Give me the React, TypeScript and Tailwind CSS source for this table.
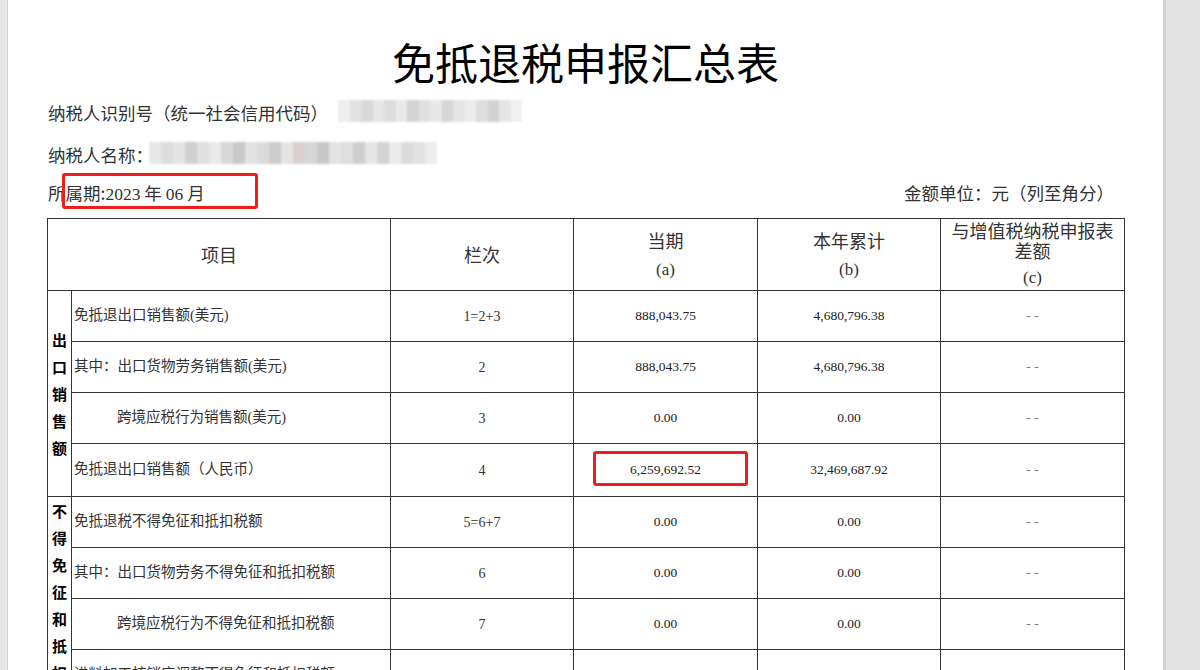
const rows = [
  { label: "免抵退出口销售额(美元)", indent: false, no: "1=2+3", a: "888,043.75", b: "4,680,796.38", c: "- -", h: "h-[51px]" },
  { label: "其中：出口货物劳务销售额(美元)", indent: false, no: "2", a: "888,043.75", b: "4,680,796.38", c: "- -", h: "h-[51px]" },
  { label: "跨境应税行为销售额(美元)", indent: true, no: "3", a: "0.00", b: "0.00", c: "- -", h: "h-[51px]" },
  { label: "免抵退出口销售额（人民币）", indent: false, no: "4", a: "6,259,692.52", b: "32,469,687.92", c: "- -", h: "h-[53px]" },
  { label: "免抵退税不得免征和抵扣税额", indent: false, no: "5=6+7", a: "0.00", b: "0.00", c: "- -", h: "h-[51px]" },
  { label: "其中：出口货物劳务不得免征和抵扣税额", indent: false, no: "6", a: "0.00", b: "0.00", c: "- -", h: "h-[51px]" },
  { label: "跨境应税行为不得免征和抵扣税额", indent: true, no: "7", a: "0.00", b: "0.00", c: "- -", h: "h-[51px]" },
  { label: "进料加工核销应调整不得免征和抵扣税额", indent: false, no: "8", a: "0.00", b: "0.00", c: "0.00", h: "h-[51px]" },
];

// pixelated blur over the masked fields
const blur1 = ["#eeeeee", "#e2e2e2", "#d9d9d9", "#e6e6e6", "#dcdcdc", "#e9e9e9", "#d4d4d4", "#e0e0e0", "#e8e8e8", "#d6d6d6", "#e4e4e4", "#ececec", "#dedede", "#d2d2d2", "#e6e6e6", "#f0f0f0"];
const blur2 = ["#e8e8e8", "#dddddd", "#e4e4e4", "#d0d0d0", "#e0e0e0", "#e9e9e9", "#d8d8d8", "#c9c9c9", "#e2e2e2", "#dadada", "#cccccc", "#e4e4e4", "#d9d0d0", "#d6d6d6", "#c8c8c8", "#e3e3e3", "#dedede", "#cfcfcf", "#e6e6e6", "#d3d3d3", "#ebebeb", "#dcdcdc", "#e1e1e1", "#ececec"];

const serif = "font-['Liberation_Serif','Noto_Sans_CJK_SC',serif]";

function Blur({ colors, cell }: { colors: string[]; cell: string }) {
  return (
    <span className="inline-flex blur-[0.8px]">
      {colors.map((c, i) => (
        <span key={i} className={cell} style={{ backgroundColor: c }} />
      ))}
    </span>
  );
}

function VText({ text }: { text: string }) {
  return (
    <div className="flex flex-col items-center font-['Noto_Sans_CJK_SC',sans-serif] font-bold text-[15px] leading-[27px] text-black">
      {text.split("").map((ch, i) => (
        <span key={i}>{ch}</span>
      ))}
    </div>
  );
}

export default function App() {
  const cell = "border border-[#333]";
  return (
    <div className="w-[1200px] h-[670px] overflow-hidden flex bg-[#e3e3e3] font-['Noto_Sans_CJK_SC',sans-serif]">
      <div className="w-[8px] shrink-0 bg-[#e6e6e6] border-r border-[#d2d2d2]" />
      <div className="w-[1155px] shrink-0 bg-white relative">
        {/* title */}
        <div className="h-[84px] pt-[38px] text-center text-[43px] leading-[46px] text-black">免抵退税申报汇总表</div>

        <div className="pl-[40px] pr-[49px] text-[17.5px] leading-[28px] text-[#333]">
          <div className="mt-[15px] h-[28px] flex items-center">
            <span>纳税人识别号（统一社会信用代码）</span>
            <span className="ml-[10px] mt-[2px]">
              <Blur colors={blur1} cell="w-[11.5px] h-[22px]" />
            </span>
          </div>
          <div className="mt-[14px] h-[28px] flex items-center">
            <span>纳税人名称：</span>
            <span className="ml-[-4px] mt-[2px]">
              <Blur colors={blur2} cell="w-[12px] h-[22px]" />
            </span>
          </div>
          <div className="mt-[10px] h-[28px] flex items-center justify-between">
            <span>
              所属期:<span className={serif}>2023</span> 年 <span className={serif}>06</span> 月
            </span>
            <span>金额单位：元（列至角分）</span>
          </div>
        </div>

        <table className="mt-[11px] ml-[39px] w-[1077px] table-fixed border-collapse text-[#333]">
          <colgroup>
            <col className="w-[24px]" />
            <col className="w-[319px]" />
            <col className="w-[183px]" />
            <col className="w-[184px]" />
            <col className="w-[183px]" />
            <col className="w-[184px]" />
          </colgroup>
          <thead>
            <tr className="h-[72px] text-[18px] font-normal">
              <th colSpan={2} className={`${cell} font-normal`}>项目</th>
              <th className={`${cell} font-normal`}>栏次</th>
              <th className={`${cell} font-normal`}>
                <div className="leading-[22px]">当期</div>
                <div className={`${serif} text-[17px] leading-[22px] mt-[8px]`}>(a)</div>
              </th>
              <th className={`${cell} font-normal`}>
                <div className="leading-[22px]">本年累计</div>
                <div className={`${serif} text-[17px] leading-[22px] mt-[8px]`}>(b)</div>
              </th>
              <th className={`${cell} font-normal align-top`}>
                <div className="leading-[20px] mt-[1px] text-[18px]">与增值税纳税申报表</div>
                <div className="leading-[20px] text-[18px]">差额</div>
                <div className={`${serif} text-[17px] leading-[22px] mt-[7px]`}>(c)</div>
              </th>
            </tr>
          </thead>
          <tbody className="text-[14.5px]">
            {rows.map((r, i) => (
              <tr key={i} className={r.h}>
                {i === 0 && (
                  <td rowSpan={4} className={`${cell} align-middle p-0`}>
                    <VText text="出口销售额" />
                  </td>
                )}
                {i === 4 && (
                  <td rowSpan={4} className={`${cell} align-top p-0`}>
                    <VText text="不得免征和抵扣" />
                  </td>
                )}
                <td className={`${cell} ${serif} whitespace-nowrap ${r.indent ? "pl-[45px]" : "pl-[2px]"}`}>{r.label}</td>
                <td className={`${cell} ${serif} text-center text-[14px]`}>{r.no}</td>
                <td className={`${cell} ${serif} text-center text-[13.5px] text-[#222]`}>{r.a}</td>
                <td className={`${cell} ${serif} text-center text-[13.5px] text-[#222]`}>{r.b}</td>
                <td className={`${cell} ${serif} text-center text-[13.5px] ${r.c === "- -" ? "text-[#777]" : "text-[#222]"}`}>{r.c}</td>
              </tr>
            ))}
          </tbody>
        </table>

        {/* red annotation boxes */}
        <div className="absolute left-[54px] top-[173px] w-[196px] h-[36px] border-[3px] border-[#f21c1c] rounded-[3px]" />
        <div className="absolute left-[585px] top-[451px] w-[155px] h-[35px] border-[3px] border-[#f21c1c] rounded-[3px]" />
      </div>
      <div className="flex-1 border-l-[3px] border-[#d4d4d4] bg-[#e3e3e3]" />
    </div>
  );
}
